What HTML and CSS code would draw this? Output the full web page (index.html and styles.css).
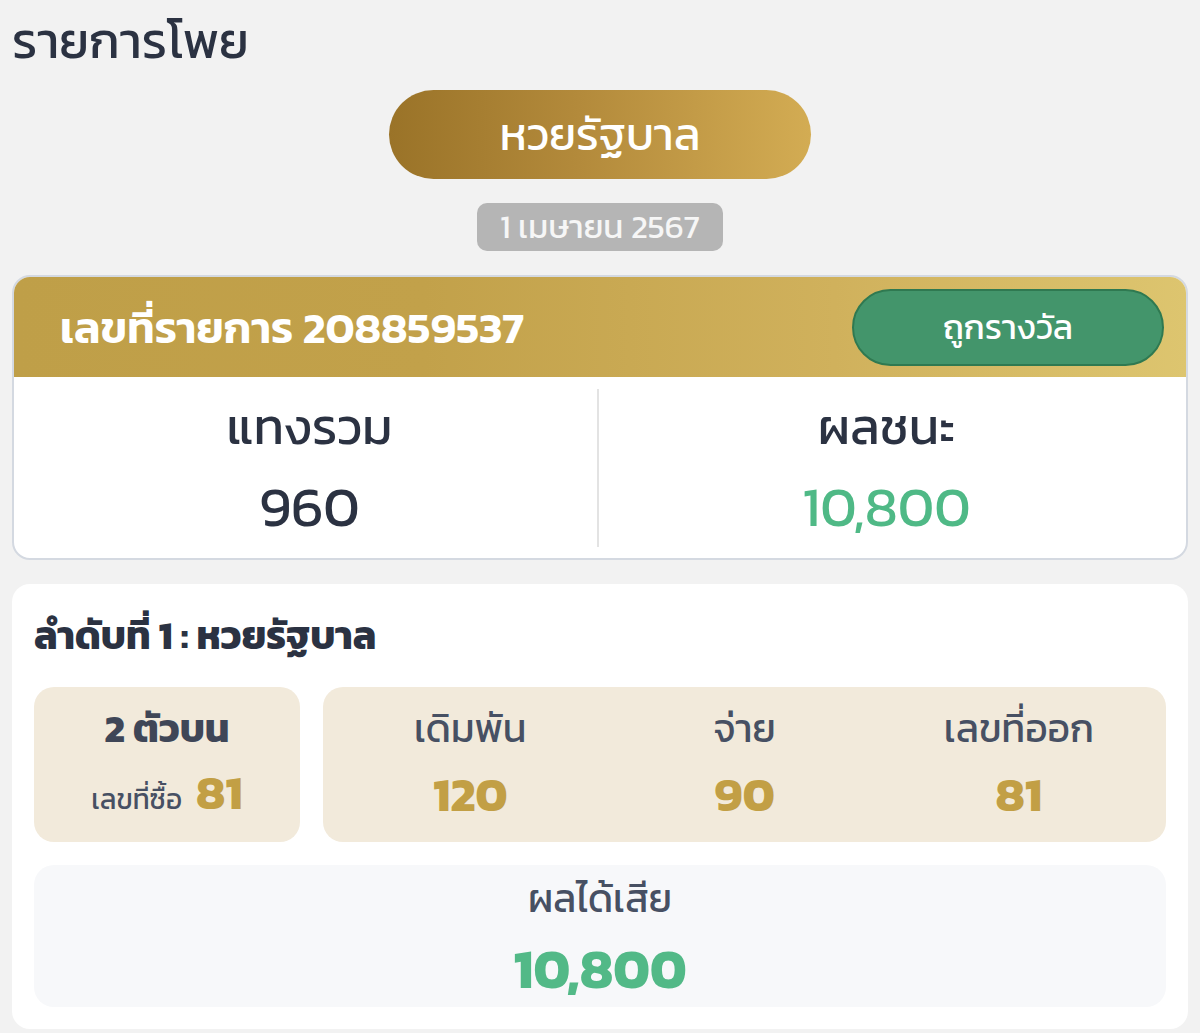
FILE: index.html
```html
<!DOCTYPE html>
<html lang="th">
<head>
<meta charset="utf-8">
<meta name="viewport" content="width=device-width, initial-scale=1">
<title>รายการโพย</title>
<link rel="stylesheet" href="styles.css">
</head>
<body>

<div class="page">

	<h1 class="page-title">รายการโพย</h1>

	<div class="lotto-head">
		<div class="lotto-name">หวยรัฐบาล</div>
		<div class="lotto-date">1 เมษายน 2567</div>
	</div>

	<!-- bill summary -->
	<div class="bill">
		<div class="bill__head">
			<span class="bill__no">เลขที่รายการ 208859537</span>
			<span class="bill__status">ถูกรางวัล</span>
		</div>
		<div class="bill__sum">
			<div class="sum">
				<div class="sum__label">แทงรวม</div>
				<div class="sum__value">960</div>
			</div>
			<div class="sum">
				<div class="sum__label">ผลชนะ</div>
				<div class="sum__value sum__value--win">10,800</div>
			</div>
		</div>
	</div>

	<!-- bet items -->
	<div class="item">
		<h2 class="item__title">ลำดับที่ 1 : หวยรัฐบาล</h2>

		<div class="item__row">
			<div class="item__type">
				<div class="type__name">2 ตัวบน</div>
				<div class="type__buy"><span class="type__buy-label">เลขที่ซื้อ</span><span class="gold-num">81</span></div>
			</div>
			<div class="item__stats">
				<div class="stat">
					<div class="stat__label">เดิมพัน</div>
					<div class="gold-num">120</div>
				</div>
				<div class="stat">
					<div class="stat__label">จ่าย</div>
					<div class="gold-num">90</div>
				</div>
				<div class="stat">
					<div class="stat__label">เลขที่ออก</div>
					<div class="gold-num">81</div>
				</div>
			</div>
		</div>

		<div class="item__result">
			<div class="stat__label">ผลได้เสีย</div>
			<div class="result__value">10,800</div>
		</div>
	</div>

</div>

</body>
</html>
```
FILE: styles.css
```css
body {
	margin: 0;
	background-color: #f2f2f2;
	font-family: "Kanit", "Noto Sans Thai", sans-serif;
	color: #2b3242;
}

.page {
	padding: 8px 12px 3px;
}

.page-title {
	margin: 0;
	font-size: 50px;
	font-weight: 400;
	line-height: 66px;
}

/* lottery name + date */
.lotto-head {
	display: flex;
	flex-direction: column;
	align-items: center;
	gap: 24px;
	margin-top: 16px;
}

.lotto-name {
	width: 422px;
	height: 89px;
	border-radius: 45px;
	background: linear-gradient(90deg, #9a7328 0%, #b38a3b 45%, #d3ac53 100%);
	color: #fff;
	font-size: 45px;
	line-height: 89px;
	text-align: center;
}

.lotto-date {
	width: 246px;
	height: 48px;
	border-radius: 10px;
	background-color: #b5b5b5;
	color: #f6f6f6;
	font-size: 33px;
	line-height: 48px;
	text-align: center;
}

/* bill card */
.bill {
	margin-top: 24px;
	border: 2px solid #d4d9e1;
	border-radius: 18px;
	overflow: hidden;
	background-color: #fff;
}

.bill__head {
	display: flex;
	align-items: center;
	justify-content: space-between;
	height: 100px;
	padding: 0 22px 0 46px;
	background: linear-gradient(90deg, #bf9f48 0%, #c2a14a 35%, #d0b15c 70%, #ddc56f 100%);
}

.bill__no {
	color: #fff;
	font-size: 44px;
	font-weight: 600;
}

.bill__status {
	width: 308px;
	height: 73px;
	border: 2px solid #2f7951;
	border-radius: 40px;
	background-color: #43956b;
	color: #fff;
	font-size: 34px;
	line-height: 73px;
	text-align: center;
}

.bill__sum {
	display: flex;
	padding: 12px 12px 11px 8px;
}

.sum {
	flex: 1;
	text-align: center;
}

.sum + .sum {
	border-left: 2px solid #e3e3e3;
}

.sum__label {
	font-size: 50px;
	line-height: 76px;
}

.sum__value {
	font-size: 56px;
	line-height: 82px;
}

.sum__value--win {
	color: #4fb986;
}

/* bet item card */
.item {
	display: flex;
	flex-direction: column;
	gap: 23px;
	margin-top: 24px;
	padding: 22px;
	border-radius: 18px;
	background-color: #fff;
}

.item__title {
	margin: 0;
	font-size: 39px;
	font-weight: 700;
	line-height: 58px;
}

.item__row {
	display: grid;
	grid-template-columns: 266px 1fr;
	gap: 23px;
}

.item__type,
.item__stats {
	height: 155px;
	border-radius: 20px;
	background-color: #f2eadb;
}

.item__type {
	display: flex;
	flex-direction: column;
	align-items: center;
	justify-content: center;
	gap: 6px;
}

.type__name {
	font-size: 39px;
	font-weight: 700;
	line-height: 56px;
	color: #3f4657;
}

.type__buy {
	display: flex;
	align-items: baseline;
	gap: 14px;
	line-height: 60px;
}

.type__buy-label {
	font-size: 28px;
	color: #475063;
}

.gold-num {
	font-size: 48px;
	font-weight: 700;
	line-height: 60px;
	color: #c29f45;
}

.item__stats {
	display: grid;
	grid-template-columns: repeat(3, 1fr);
	padding: 0 10px;
}

.stat {
	display: flex;
	flex-direction: column;
	align-items: center;
	justify-content: center;
	gap: 8px;
	padding-bottom: 6px;
}

.stat__label {
	font-size: 39px;
	line-height: 56px;
	color: #475063;
}

.item__result {
	display: flex;
	flex-direction: column;
	align-items: center;
	justify-content: center;
	gap: 10px;
	height: 142px;
	border-radius: 20px;
	background-color: #f7f8fa;
}

.result__value {
	font-size: 55px;
	font-weight: 700;
	line-height: 66px;
	color: #52b987;
}
```
